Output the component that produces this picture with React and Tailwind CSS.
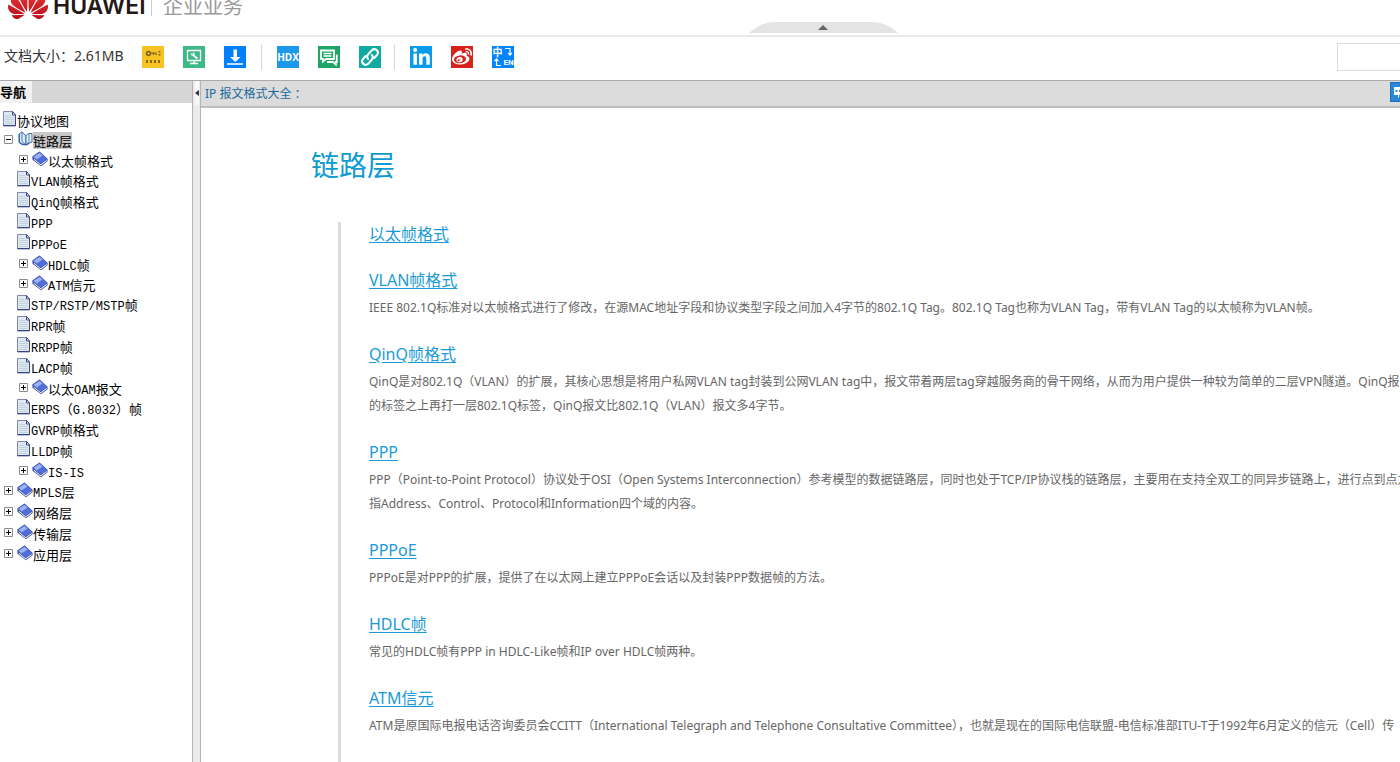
import React from "react";
import { SiHuawei } from "react-icons/si";
import { FaLinkedinIn, FaWeibo } from "react-icons/fa";

const UI = "font-['Noto_Sans','Noto_Sans_CJK_SC',sans-serif]";

const tree = [
  { label: "协议地图", type: "page" },
  {
    label: "链路层",
    type: "open",
    children: [
      { label: "以太帧格式", type: "book" },
      { label: "VLAN帧格式", type: "page" },
      { label: "QinQ帧格式", type: "page" },
      { label: "PPP", type: "page" },
      { label: "PPPoE", type: "page" },
      { label: "HDLC帧", type: "book" },
      { label: "ATM信元", type: "book" },
      { label: "STP/RSTP/MSTP帧", type: "page" },
      { label: "RPR帧", type: "page" },
      { label: "RRPP帧", type: "page" },
      { label: "LACP帧", type: "page" },
      { label: "以太OAM报文", type: "book" },
      { label: "ERPS（G.8032）帧", type: "page" },
      { label: "GVRP帧格式", type: "page" },
      { label: "LLDP帧", type: "page" },
      { label: "IS-IS", type: "book" },
    ],
  },
  { label: "MPLS层", type: "book" },
  { label: "网络层", type: "book" },
  { label: "传输层", type: "book" },
  { label: "应用层", type: "book" },
];

const topics = [
  { title: "以太帧格式", lines: [] },
  {
    title: "VLAN帧格式",
    lines: [
      "IEEE 802.1Q标准对以太帧格式进行了修改，在源MAC地址字段和协议类型字段之间加入4字节的802.1Q Tag。802.1Q Tag也称为VLAN Tag，带有VLAN Tag的以太帧称为VLAN帧。",
    ],
  },
  {
    title: "QinQ帧格式",
    lines: [
      "QinQ是对802.1Q（VLAN）的扩展，其核心思想是将用户私网VLAN tag封装到公网VLAN tag中，报文带着两层tag穿越服务商的骨干网络，从而为用户提供一种较为简单的二层VPN隧道。QinQ报",
      "的标签之上再打一层802.1Q标签，QinQ报文比802.1Q（VLAN）报文多4字节。",
    ],
  },
  {
    title: "PPP",
    lines: [
      "PPP（Point-to-Point Protocol）协议处于OSI（Open Systems Interconnection）参考模型的数据链路层，同时也处于TCP/IP协议栈的链路层，主要用在支持全双工的同异步链路上，进行点到点之",
      "指Address、Control、Protocol和Information四个域的内容。",
    ],
  },
  {
    title: "PPPoE",
    lines: ["PPPoE是对PPP的扩展，提供了在以太网上建立PPPoE会话以及封装PPP数据帧的方法。"],
  },
  { title: "HDLC帧", lines: ["常见的HDLC帧有PPP in HDLC-Like帧和IP over HDLC帧两种。"] },
  {
    title: "ATM信元",
    lines: [
      "ATM是原国际电报电话咨询委员会CCITT（International Telegraph and Telephone Consultative Committee），也就是现在的国际电信联盟-电信标准部ITU-T于1992年6月定义的信元（Cell）传",
    ],
  },
];

function PageIcon() {
  return (
    <svg width="14" height="16" viewBox="0 0 14 16" className="shrink-0" aria-hidden="true">
      <path d="M.5 .5h9l3 3.500v11h-12z" fill="#dfe9f2" stroke="#7f86b4" />
      <path d="M.5 14.500h12V4" fill="none" stroke="#3a4580" />
      <path d="M9.500 .5v3.500h3z" fill="#fff" stroke="#3a4580" />
      <path d="M2 4.500h6M2 6.500h9M2 8.500h9M2 10.500h9M2 12.500h9" stroke="#c0d2de" />
    </svg>
  );
}

function BookIcon() {
  return (
    <svg width="16" height="16" viewBox="0 0 16 16" className="shrink-0" aria-hidden="true">
      <path d="M.3 5.500 7.500 .5l8 7.300v2.400L9 15.200 .8 9z" fill="#2a3d94" />
      <path d="M1.800 7.600 8.700 13.300l6-4.600v1.300l-5.800 4.500L2 9z" fill="#eef2ff" />
      <path d="M.6 5.800 7.500 .9l8 7-6.700 4.900z" fill="#4f6ed8" />
      <path d="M1.800 5.800 7.500 1.900l3 2.600-5.900 3.900z" fill="#9db1f5" />
      <path d="M.8 5.800v2.800l1 .8" fill="none" stroke="#7f93dd" />
    </svg>
  );
}

function OpenBookIcon() {
  return (
    <svg width="16" height="16" viewBox="0 0 16 16" className="shrink-0" aria-hidden="true">
      <path d="M2.500 2.500 5 .8l4 4.200v9L5 12.800l-2.500-1.300z" fill="#dceafa" stroke="#3b6ba8" strokeLinejoin="round" />
      <path d="M9 5c.8-1.500 2-2.500 3-2.500h3V11l-2.800 1L9 14z" fill="#eaf3fd" stroke="#3b6ba8" strokeLinejoin="round" />
      <path d="M5 1v9.500L9 14l3-3.500v-8" fill="none" stroke="#4c80bd" />
      <path d="M2 3v8.500l3 2.200h4.500l3-1.200" fill="none" stroke="#2f5e9e" />
    </svg>
  );
}

function Toggle({ open }) {
  return (
    <button type="button" aria-label={open ? "收起" : "展开"} className="mt-1 size-[9px] shrink-0">
      <svg width="9" height="9" viewBox="0 0 9 9" className="block">
        <path d="M.5 .5h8v8h-8z" fill="#fff" stroke="#8c8c8c" />
        <path d={open ? "M2 4.500h5" : "M2 4.500h5M4.500 2v5"} stroke="#000" />
      </svg>
    </button>
  );
}

function TreeLabel({ text, selected }) {
  return (
    <a
      href="#topic"
      className={`mt-px h-[17px] whitespace-nowrap text-[13px] leading-[17px] text-black ${selected ? "bg-[#c8c8c8]" : ""}`}
    >
      {text.split(/([\x20-\x7e]+)/).map((part, i) =>
        i % 2 ? (
          <span key={i} className="font-['Liberation_Mono',monospace] text-[12px]">
            {part}
          </span>
        ) : (
          part
        ),
      )}
    </a>
  );
}

function TreeNode({ node, nested }) {
  const page = node.type === "page";
  const indent = nested ? (page ? "pl-[17px]" : "pl-[19px]") : page ? "pl-[3px]" : "pl-1";
  const tall = nested ? page : node.type === "book";
  return (
    <li>
      <div className={`flex items-start ${tall ? "h-[21px]" : "h-5"} ${indent}`}>
        {!page && <Toggle open={node.type === "open"} />}
        <span className={`flex ${page ? "" : "ml-1"}`}>
          {page && <PageIcon />}
          {node.type === "book" && <BookIcon />}
          {node.type === "open" && <OpenBookIcon />}
        </span>
        <TreeLabel text={node.label} selected={node.type === "open"} />
      </div>
      {node.children && (
        <ul>
          {node.children.map((c) => (
            <TreeNode key={c.label} node={c} nested />
          ))}
        </ul>
      )}
    </li>
  );
}

function Tool({ label, color, children }) {
  return (
    <button
      type="button"
      aria-label={label}
      className={`flex size-[22px] shrink-0 items-center justify-center overflow-hidden text-white ${color}`}
    >
      {children}
    </button>
  );
}

function Toolbar() {
  return (
    <div className="flex h-11 shrink-0 items-center border-b border-[#aaaaaa] pb-[3px] pl-1">
      <span className="w-[138px] whitespace-nowrap pb-[2px] text-[14px] leading-5 text-[#333]">文档大小：2.61MB</span>
      <div className="flex gap-[19px]">
        <Tool label="激活码" color="bg-[#f8c224]">
          <svg width="22" height="22" viewBox="0 0 22 22">
            <circle cx="6.500" cy="7.500" r="1.900" fill="none" stroke="#7a6020" strokeWidth="1.500" />
            <path d="M8.500 7h5.500v2M11.500 7v2" fill="none" stroke="#7a6020" strokeWidth="1.200" />
            <path d="M17.500 5v1.500M17.500 8v1.500M5 14v3M9 14v3M13 14v3M17 14v3" stroke="#7a6020" strokeWidth="1.800" />
          </svg>
        </Tool>
        <Tool label="工具" color="bg-[#3cb985]">
          <svg width="22" height="22" viewBox="0 0 22 22" fill="none" stroke="#fff">
            <path d="M4.500 4.500h13v10h-13zM11 14.500v3M7 17.500h8" strokeWidth="1.300" />
            <path d="m10.500 9.500 4 3" strokeWidth="1.800" />
            <path d="M8 7.500c0 2 1.800 3 3 1.800 1.100-1.200.2-2.600-1-2.600l.3 1.500-.9.700z" fill="#fff" strokeWidth=".6" />
          </svg>
        </Tool>
        <Tool label="下载" color="bg-[#0080ff]">
          <svg width="22" height="22" viewBox="0 0 22 22" fill="#fff">
            <path d="M9.500 3.500h3.500V11H16.500l-5.200 5L6 11h3.500zM3 17.200h16v1.600H3z" />
          </svg>
        </Tool>
      </div>
      <span className="ml-[15px] mr-[15px] h-[26px] w-px bg-[#d8d8d8]" />
      <div className="flex gap-[19px]">
        <Tool label="HDX" color="bg-[#1d97ea]">
          <span className="font-['Open_Sans',sans-serif] text-[10px] font-bold leading-none">HDX</span>
        </Tool>
        <Tool label="反馈" color="bg-[#1ea566]">
          <svg width="22" height="22" viewBox="0 0 22 22" fill="none" stroke="#fff" strokeWidth="1.800">
            <path d="M3 4.500h13v8.500H8l-3 2.500V13H3z" />
            <path d="M5.500 7.500H13.500M5.500 10H13.500" strokeWidth="1.300" />
            <path d="M18.800 8.500v7.500h-1v2.500L15 16H9" />
          </svg>
        </Tool>
        <Tool label="链接" color="bg-[#10aaa0]">
          <svg width="22" height="22" viewBox="0 0 22 22" fill="none" stroke="#fff" strokeWidth="2" strokeLinecap="round">
            <path d="M9.200 13c-1.500-1.500-1.300-3.300 0-4.700l3.600-4c3.300-3 8 1 5.300 4.600L15.300 12" />
            <path d="M12.800 9c1.500 1.500 1.300 3.300 0 4.700l-3.600 4c-3.300 3-8-1-5.300-4.600L6.700 10" />
          </svg>
        </Tool>
      </div>
      <span className="ml-[13px] mr-[15px] h-[26px] w-px bg-[#d8d8d8]" />
      <div className="flex gap-[19px]">
        <Tool label="LinkedIn" color="bg-[#0a9aec]">
          <FaLinkedinIn size={19} />
        </Tool>
        <Tool label="微博" color="bg-[#d82119]">
          <FaWeibo size={20} />
        </Tool>
        <Tool label="中英切换" color="bg-[#0084ff]">
          <span className="grid size-full grid-cols-2 grid-rows-2 place-items-center text-[10px] font-bold leading-[10px]">
            <span>中</span>
            <svg width="9" height="9" viewBox="0 0 9 9" fill="none" stroke="#fff" strokeWidth="1.200">
              <path d="M1 1.500h5V8M4 5.800 6 8l2-2.200" />
            </svg>
            <svg width="9" height="9" viewBox="0 0 9 9" fill="none" stroke="#fff" strokeWidth="1.200">
              <path d="M8 7.500H3.500V1M1.500 3.200 3.500 1l2 2.200" />
            </svg>
            <span className="font-['Roboto',sans-serif] text-[8px]">EN</span>
          </span>
        </Tool>
      </div>
      <input
        type="text"
        aria-label="搜索"
        className="ml-auto h-7 w-[63px] shrink-0 border border-r-0 border-[#dcdcdc] bg-white px-2 text-[12px] outline-none"
      />
    </div>
  );
}

export default function App() {
  return (
    <div className={`flex h-screen flex-col overflow-hidden bg-white ${UI}`}>
      <header className="relative flex h-[37px] shrink-0 items-start overflow-hidden border-b-2 border-[#e9e9e9] pl-2">
        <svg width="0" height="0" className="absolute" aria-hidden="true">
          <linearGradient id="petal" x1="0" y1="0" x2="0" y2="1">
            <stop offset="0" stopColor="#ee3b3b" />
            <stop offset="1" stopColor="#b90d18" />
          </linearGradient>
        </svg>
        <SiHuawei size={40} fill="url(#petal)" className="-mt-4 shrink-0" />
        <span className="-mt-2 ml-[5px] w-[98px] font-['Inter',sans-serif] text-[23px] font-semibold leading-7 text-[#231815]">
          HUAWEI
        </span>
        <span className="h-4 w-px bg-[#cccccc]" />
        <span className="-mt-2 ml-[11px] text-[20px] leading-[30px] text-[#999]">企业业务</span>
        <button type="button" aria-label="收起页眉" className="absolute bottom-[2px] left-[749px]">
          <svg width="149" height="11" viewBox="0 0 149 11" className="block">
            <path d="M0 11C8 4 15 0 27 0h95c12 0 19 4 27 11z" fill="#e4e4e4" />
            <path d="M69 8 74 3l5 5z" fill="#666" />
          </svg>
        </button>
      </header>

      <Toolbar />

      <div className="flex min-h-0 flex-1">
        <nav className="flex w-[192px] shrink-0 flex-col">
          <div className="flex h-[22px] shrink-0 bg-[#d6d6d6]">
            <h2 className="flex w-8 items-center bg-[#f2f2f2] text-[13px] font-bold leading-none text-black">
              <span className="whitespace-nowrap">导航</span>
            </h2>
          </div>
          <ul className="mt-2 font-['Noto_Sans_CJK_SC',sans-serif]">
            {tree.map((n) => (
              <TreeNode key={n.label} node={n} />
            ))}
          </ul>
        </nav>

        <div className="flex w-[9px] shrink-0 justify-center border-x border-[#b4b4b4] bg-[#ebebeb]">
          <button type="button" aria-label="收起导航" className="flex h-6 w-1 items-center bg-[#f8f8f8]">
            <svg width="4" height="6" viewBox="0 0 4 6">
              <path d="M4 0v6L0 3z" fill="#333" />
            </svg>
          </button>
        </div>

        <main className="flex min-w-0 flex-1 flex-col overflow-hidden">
          <div className="flex h-[27px] shrink-0 items-center border-b-2 border-[#bebebe] bg-[#dcdcdc] pl-1">
            <span className="pt-px text-[12px] leading-5 text-[#1a6a9c]">IP 报文格式大全 ：</span>
            <button
              type="button"
              aria-label="评论"
              className="mb-1 ml-auto h-5 w-[10px] shrink-0 overflow-hidden border border-r-0 border-[#1d6fb8] bg-[#2a88d8]"
            >
              <svg width="9" height="18" viewBox="0 0 9 18" className="block">
                <path d="M3 4h6v8H8v2.500H7V12H3z" fill="#fff" />
                <path d="M4.500 7h2v2h-2zM8 7h1v2H8z" fill="#2a88d8" />
              </svg>
            </button>
          </div>
          <div className="pl-[110px] pt-9">
            <h1 className="text-[28px] leading-[42px] text-[#0d9bd3]">链路层</h1>
            <ul className="ml-[27px] mt-9 flex flex-col gap-[22px] border-l-[3px] border-[#dcdcdc] pb-20 pl-7">
              {topics.map((t) => (
                <li key={t.title}>
                  <h3 className="text-[16px] leading-6">
                    <a href="#topic" className="text-[#1a9bd7] underline underline-offset-2">
                      {t.title}
                    </a>
                  </h3>
                  {t.lines.length > 0 && (
                    <p className="mt-1 text-[12px] leading-6 text-[#666]">
                      {t.lines.map((l) => (
                        <span key={l} className="block whitespace-nowrap">
                          {l}
                        </span>
                      ))}
                    </p>
                  )}
                </li>
              ))}
            </ul>
          </div>
        </main>
      </div>
    </div>
  );
}
